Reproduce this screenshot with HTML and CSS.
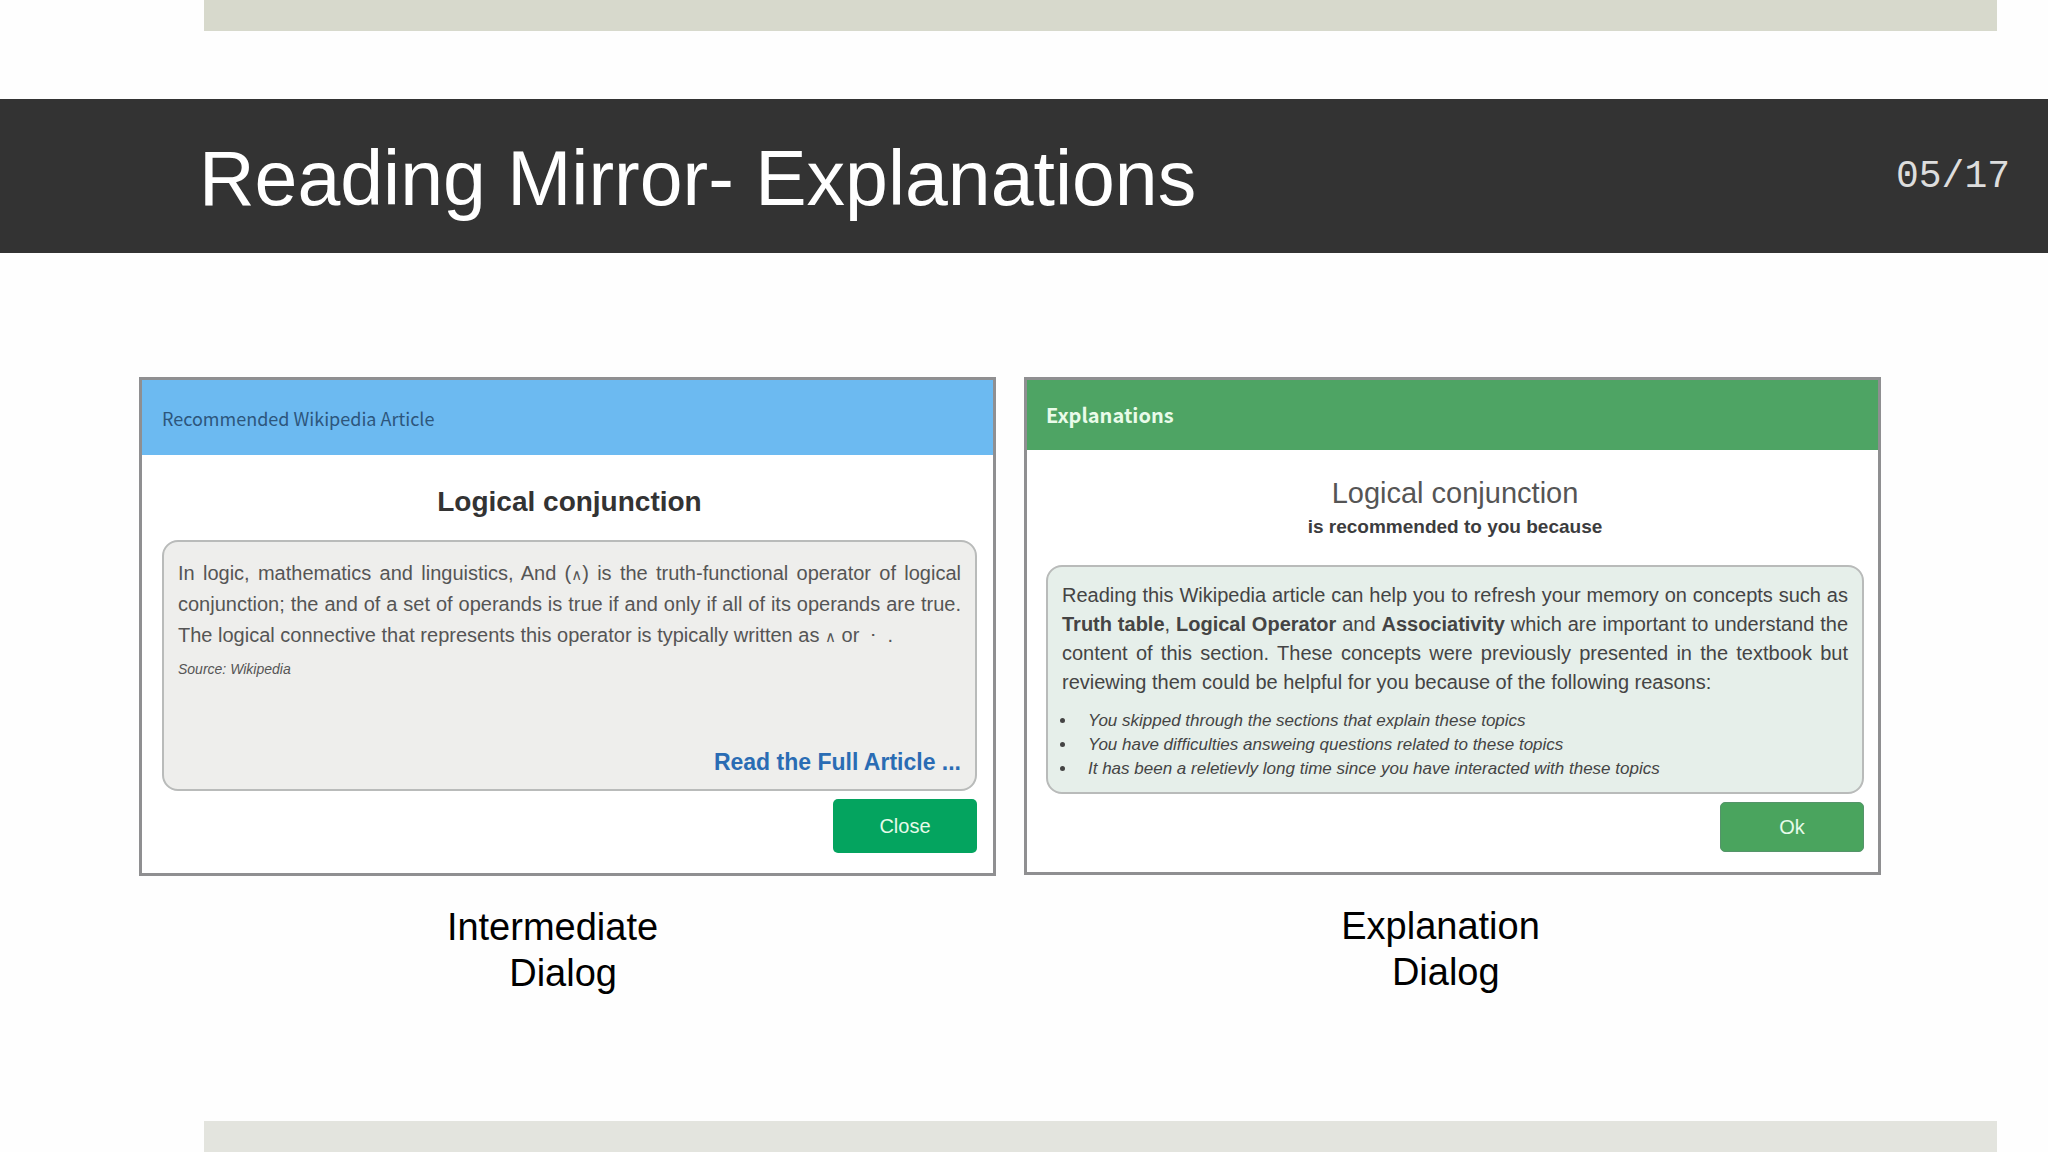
FILE: index.html
```html
<!DOCTYPE html>
<html lang="en">
<head>
<meta charset="utf-8">
<title>Reading Mirror- Explanations</title>
<link rel="stylesheet" href="styles.css">
</head>
<body>
<div class="slide">
  <div class="band band-top"></div>
  <header class="title-bar">
    <h1 class="title">Reading Mirror- Explanations</h1>
    <span class="page-number">05/17</span>
  </header>
  <main class="stage">
    <figure class="example">
      <section class="dialog dialog-article">
        <h2 class="dialog-header">Recommended Wikipedia Article</h2>
        <div class="dialog-body">
          <h3 class="topic">Logical conjunction</h3>
          <div class="panel">
            <p class="summary">In logic, mathematics and linguistics, And (<span class="wedge">∧</span>) is the truth-functional operator of logical conjunction; the and of a set of operands is true if and only if all of its operands are true. The logical connective that represents this operator is typically written as <span class="wedge">∧</span> or &nbsp;⋅&nbsp; .</p>
            <p class="source">Source: Wikipedia</p>
            <a class="more" href="#">Read the Full Article ...</a>
          </div>
          <button class="action" type="button">Close</button>
        </div>
      </section>
      <figcaption class="caption">Intermediate<br>&nbsp;&nbsp;Dialog</figcaption>
    </figure>
    <figure class="example">
      <section class="dialog dialog-explanation">
        <h2 class="dialog-header">Explanations</h2>
        <div class="dialog-body">
          <h3 class="topic">Logical conjunction</h3>
          <p class="subtitle">is recommended to you because</p>
          <div class="panel">
            <p class="summary">Reading this Wikipedia article can help you to refresh your memory on concepts such as <b>Truth table</b>, <b>Logical Operator</b> and <b>Associativity</b> which are important to understand the content of this section. These concepts were previously presented in the textbook but reviewing them could be helpful for you because of the following reasons:</p>
            <ul class="reasons">
              <li>You skipped through the sections that explain these topics</li>
              <li>You have difficulties answeing questions related to these topics</li>
              <li>It has been a reletievly long time since you have interacted with these topics</li>
            </ul>
          </div>
          <button class="action" type="button">Ok</button>
        </div>
      </section>
      <figcaption class="caption">Explanation<br>&nbsp;Dialog</figcaption>
    </figure>
  </main>
  <div class="band band-bottom"></div>
</div>
</body>
</html>
```
FILE: styles.css
```css
* {
  box-sizing: border-box;
  margin: 0;
  padding: 0;
}

body {
  background: #fefefe;
  color: #000;
  font-family: "Liberation Sans", Arial, sans-serif;
}

.slide {
  display: flex;
  flex-direction: column;
  min-height: 100vh;
}

.band {
  height: 31px;
  margin: 0 51px 0 204px;
}

.band-top {
  background: #d7d9cc;
}

.band-bottom {
  background: #e3e4de;
}

.title-bar {
  display: flex;
  align-items: center;
  justify-content: space-between;
  margin-top: 68px;
  padding: 0 38px 0 199px;
  min-height: 154px;
  background: #333;
  color: #fff;
}

.title {
  padding-top: 4px;
  font-size: 77px;
  font-weight: 400;
  line-height: 88px;
}

.page-number {
  color: #ddd;
  font-family: "Liberation Mono", "Courier New", monospace;
  font-size: 38px;
}

.stage {
  display: flex;
  flex: 1;
  align-items: flex-start;
  gap: 28px;
  padding: 124px 167px 40px 139px;
}

.example {
  flex: 1;
}

.dialog {
  border: 3px solid #8f8f91;
  background: #fff;
  color: #444;
}

.dialog-header {
  display: flex;
  align-items: center;
  padding: 0 20px;
  font-family: "Noto Sans CJK SC", "Noto Sans", sans-serif;
  line-height: 28px;
}

.dialog-article .dialog-header {
  height: 75px;
  background: #6cbaf1;
  color: #2d567c;
  font-size: 18px;
  font-weight: 400;
}

.dialog-explanation .dialog-header {
  height: 70px;
  padding: 0 19px;
  background: #4ea464;
  color: #e9fbe9;
  font-size: 20px;
  font-weight: 700;
}

.dialog-body {
  display: flex;
  flex-direction: column;
  padding: 24px 16px 20px 20px;
}

.dialog-explanation .dialog-body {
  padding: 23px 14px 20px 19px;
}

.topic {
  line-height: 40px;
  text-align: center;
}

.dialog-article .topic {
  margin: 3px 0 18px;
  color: #333;
  font-size: 28px;
}

.dialog-explanation .topic {
  color: #555;
  font-size: 29px;
  font-weight: 400;
}

.subtitle {
  margin-bottom: 24px;
  color: #3c3c3e;
  font-size: 19px;
  font-weight: 700;
  line-height: 28px;
  text-align: center;
}

.panel {
  display: flex;
  flex-direction: column;
  padding: 14px 14px 11px;
  border: 2px solid #b9bbba;
  border-radius: 16px;
}

.dialog-article .panel {
  padding: 16px 14px 12px;
  background: #eeeeec;
}

.dialog-explanation .panel {
  background: #e6efea;
}

.summary {
  font-size: 20px;
  line-height: 29px;
  text-align: justify;
}

.dialog-article .summary {
  color: #555;
  line-height: 31px;
}

.wedge {
  font-family: "DejaVu Sans", sans-serif;
  font-size: 15px;
  line-height: 1;
}

.source {
  color: #555;
  font-size: 14px;
  font-style: italic;
  line-height: 36px;
}

.more {
  align-self: flex-end;
  margin-top: 60px;
  color: #2a6cb4;
  font-size: 23px;
  font-weight: 700;
  line-height: 30px;
  text-decoration: none;
}

.reasons {
  margin-top: 12px;
  padding-left: 15px;
  font-size: 17px;
  font-style: italic;
  line-height: 24px;
}

.reasons li {
  padding-left: 11px;
}

.action {
  align-self: flex-end;
  width: 144px;
  height: 54px;
  margin-top: 8px;
  border: 0;
  border-radius: 5px;
  background: #04a45f;
  color: #e6fbea;
  font: 20px "Liberation Sans", Arial, sans-serif;
}

.dialog-explanation .action {
  height: 50px;
  border: 1px solid #55946a;
  background: #4aa45e;
}

.caption {
  margin-top: 28px;
  padding-right: 24px;
  font-size: 38px;
  line-height: 46px;
  text-align: center;
}

.dialog-article + .caption {
  padding-right: 30px;
}
```
